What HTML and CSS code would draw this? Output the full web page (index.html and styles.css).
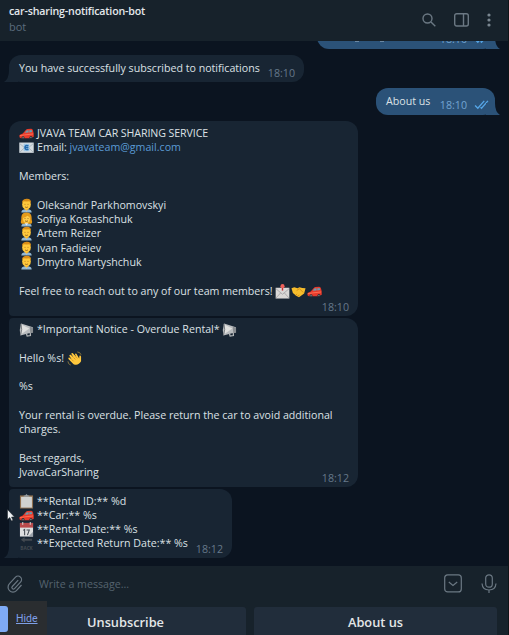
FILE: index.html
```html
<!DOCTYPE html>
<html lang="en">
<head>
<meta charset="utf-8">
<title>car-sharing-notification-bot</title>
<link rel="stylesheet" href="styles.css">
</head>
<body>
<svg class="defs" aria-hidden="true">
  <symbol id="car" viewBox="0 0 16 16">
    <path d="M.5 9.500 4 8 7 4.500Q7.500 3.500 9 3.300L13 3Q14.500 3 15 5L15.700 8V11.500L13 13H2L.5 12Z" fill="#e83b2c"/>
    <path d="M6.200 7.300 8 4.800 10.200 4.500V7ZM11 4.500 13.500 4.300 14 6.500 11 6.900Z" fill="#6b9caf"/>
    <path d="M1 10.300 6 9.500 15 8.500" stroke="#ff7053" fill="none"/>
    <circle cx="4.300" cy="12.400" r="1.600" fill="#292d33"/><circle cx="12.700" cy="12.200" r="1.600" fill="#292d33"/>
    <circle cx="4.300" cy="12.400" r=".6" fill="#a8adb0"/><circle cx="12.700" cy="12.200" r=".6" fill="#a8adb0"/>
  </symbol>
  <symbol id="email" viewBox="0 0 16 16">
    <path d="M.3 2.700h15.400v11H.3z" fill="#d5dce0"/>
    <path d="m1 4 7 6 7-6M1 13l5-5m9 5-5-5" stroke="#a8b3bd" fill="none"/>
    <path d="M5 4h6v8H5z" fill="#9cc7e8"/><path d="M10 6.300C8 5 6.300 6.200 6.300 8s1.800 3 3.700 1.800M6.500 8H10" stroke="#246bae" stroke-width="1.500" fill="none"/>
  </symbol>
  <symbol id="man" viewBox="0 0 16 16">
    <path d="M2.500 15.500Q2.500 12.500 6 12h4q3.500.5 3.500 3.500z" fill="#91b8d4"/><path d="m6 11.500 2 3 2-3z" fill="#e9edf0"/>
    <path d="M6.300 9.500h3.400v3L8 13.500 6.300 12z" fill="#dc951f"/>
    <ellipse cx="8" cy="6.800" rx="4.600" ry="5.600" fill="#ffc83b"/>
    <path d="M3.200 6Q2.500 1 8 .7T12.800 6L11.500 3.500Q8 3.800 4.500 3.500Z" fill="#d98d17"/>
    <path d="M6 6.800h.8m2.400 0h.8M6.500 9.600q1.500 1 3 0" stroke="#815019" fill="none" stroke-width=".8"/>
  </symbol>
  <symbol id="woman" viewBox="0 0 16 16">
    <path d="M2.500 15.500q0-3 3.500-3.500h4q3.500.5 3.500 3.500z" fill="#91b8d4"/>
    <path d="M8 .5C3 .5 2.500 4 2.500 7S1 11 3 12.500h10C15 11 13.500 10 13.500 7S13 .5 8 .5Z" fill="#e49a19"/>
    <ellipse cx="8" cy="7.200" rx="3.700" ry="4.500" fill="#ffcd49"/>
    <path d="M4 6Q5 2 8 2t4 4L9 4Q7 6 4 6Z" fill="#e49a19"/><path d="m6 12 2 2.500 2-2.500z" fill="#e9edf0"/>
    <path d="M6 7h.8m2.400 0h.8M6.500 9.500q1.500 1 3 0" stroke="#815019" fill="none"/>
  </symbol>
  <symbol id="inbox" viewBox="0 0 16 16">
    <path d="M.7 4h14.600v11.500H.7z" fill="#d9d8d7"/><path d="m1 5 7 6 7-6M1 15l5-5.500M15 15l-5-5.500" stroke="#aaa9ac" fill="none"/>
    <path d="M8 3v4" stroke="#bd2b30" stroke-width="1.500"/><circle cx="8" cy="2.300" r="2.200" fill="#ef615b"/>
  </symbol>
  <symbol id="shake" viewBox="0 0 16 16">
    <path d="m.5 4.500 3-1L7 4.500l2-1 3 .7 3.500.3L14 10l-5.500 4-3-1.500L2 9.500Z" fill="#f6bd2c"/>
    <path d="m6 7 3-2 4 4M5 12l1.500-1.500M7 13l1.500-1.500M9 13l-1-1" stroke="#c98112" fill="none" stroke-width=".8"/>
  </symbol>
  <symbol id="horn" viewBox="0 0 16 16">
    <path d="M2.200 1.500 14.800 5.500v5.500L1.500 14.500Q0 8 2.200 1.500Z" fill="#b9bcbe"/><path d="m3 3 8 4-8 5.500" fill="#e0e0de"/>
    <path d="M2 2q2 6-.5 12" stroke="#73777b" fill="none"/><path d="M11.500 5 15 6v5.500l-3 .5Z" fill="#888c90"/>
    <path d="m8 12.500.7 2.500 3.500-.5-.2-3" stroke="#b4b7b9" fill="none" stroke-width="1.300"/>
  </symbol>
  <symbol id="wave" viewBox="0 0 16 16">
    <path d="M7 14 1.500 8.500Q1 7 2.500 7L5 9 2.500 5Q2.500 3.500 4 4L7 7 4.500 3Q5 1.500 6.300 2.300L10 6.500 8.500 3.500Q9 2 10 3l3 5 .2-3q1.300-1 1.800 1V11q-3 5-8 3Z" fill="#ffc83d"/>
    <path d="m5 9 2 2M7 7l2 2m0-3 2 2" stroke="#c98921" fill="none" stroke-width=".8"/>
    <path d="M11 1q3 0 4 3M1 11q0 3 3 4" stroke="#8b793f" fill="none"/>
  </symbol>
  <symbol id="clip" viewBox="0 0 16 16">
    <path d="M1 1.500h14v14H1z" fill="#8f704f"/><path d="M2.200 3h11.600v11.500H2.200z" fill="#d0d2d0"/>
    <path d="M5 3V1.500h1.500L8 0l1.500 1.500H11V3z" fill="#969da2"/>
  </symbol>
  <symbol id="cal" viewBox="0 0 16 16">
    <path d="M1 1h14v14.500H1z" fill="#dedfe0"/><path d="M1 1h14v5H1z" fill="#b84a4c"/>
    <path d="M4 0v3m8-3v3" stroke="#ddd"/><path d="m4.500 9 1.500-1v6M8 8.500h3l-2 5.500" stroke="#454b53" stroke-width="1.100" fill="none"/><path d="m10 15.500 5-5v5z" fill="#9ba2aa"/>
  </symbol>
  <symbol id="back" viewBox="0 0 16 16">
    <path d="m2 4 4-3v2h8v2H6v2Z" fill="#434a51"/>
    <text x="8" y="14.500" text-anchor="middle" class="back-label">BACK</text>
  </symbol>
  <symbol id="checks" viewBox="0 0 16 12"><path d="m1 7 3 3 7-8M7 9l1 1 7-8" fill="none" stroke="#55a5e6" stroke-width="1.500"/></symbol>
</svg>

<div class="app">
  <header class="header">
    <div class="peer">
      <h1 class="title">car-sharing-notification-bot</h1>
      <div class="status">bot</div>
    </div>
    <div class="tools">
      <svg width="14" height="14" viewBox="0 0 14 14"><circle cx="5.500" cy="5.500" r="4.500"/><path d="m9 9 4.300 4.300"/></svg>
      <svg width="15" height="14" viewBox="0 0 15 14"><rect x=".7" y=".7" width="13.600" height="12.300" rx="2"/><path d="M9.500 1v12"/></svg>
      <svg class="dots" width="4" height="14" viewBox="0 0 4 14"><circle cx="2" cy="2" r="1.600"/><circle cx="2" cy="7" r="1.600"/><circle cx="2" cy="12" r="1.600"/></svg>
    </div>
  </header>

  <main class="chat">
    <div class="msg out cut tail"><span class="time">18:10</span><svg class="checks"><use href="#checks"/></svg><i class="stem"></i><i class="stem"></i></div>
    <div class="msg in short tail"><p>You have successfully subscribed to notifications</p><span class="time">18:10</span></div>
    <div class="msg out about tail"><p>About us</p><span class="time">18:10</span><svg class="checks"><use href="#checks"/></svg></div>
    <div class="msg in team">
      <p><svg class="e"><use href="#car"/></svg><span class="caps">JVAVA TEAM CAR SHARING SERVICE</span></p>
      <p><svg class="e"><use href="#email"/></svg>Email: <a>jvavateam@gmail.com</a></p>
      <p></p>
      <p>Members:</p>
      <p></p>
      <p><svg class="e"><use href="#man"/></svg>Oleksandr Parkhomovskyi</p>
      <p><svg class="e"><use href="#woman"/></svg>Sofiya Kostashchuk</p>
      <p><svg class="e"><use href="#man"/></svg>Artem Reizer</p>
      <p><svg class="e"><use href="#man"/></svg>Ivan Fadieiev</p>
      <p><svg class="e"><use href="#man"/></svg>Dmytro Martyshchuk</p>
      <p></p>
      <p>Feel free to reach out to any of our team members! <span class="row"><svg class="e"><use href="#inbox"/></svg><svg class="e"><use href="#shake"/></svg><svg class="e"><use href="#car"/></svg></span></p>
      <span class="time">18:10</span>
    </div>
    <div class="msg in notice">
      <p><svg class="e"><use href="#horn"/></svg>*Important Notice - Overdue Rental* <svg class="e"><use href="#horn"/></svg></p>
      <p></p>
      <p>Hello %s! <svg class="e"><use href="#wave"/></svg></p>
      <p></p>
      <p>%s</p>
      <p></p>
      <p>Your rental is overdue. Please return the car to avoid additional</p>
      <p>charges.</p>
      <p></p>
      <p>Best regards,</p>
      <p>JvavaCarSharing</p>
      <span class="time">18:12</span>
    </div>
    <div class="msg in rental tail">
      <p><svg class="e"><use href="#clip"/></svg>**Rental ID:** %d</p>
      <p><svg class="e"><use href="#car"/></svg>**Car:** %s</p>
      <p><svg class="e"><use href="#cal"/></svg>**Rental Date:** %s</p>
      <p><svg class="e"><use href="#back"/></svg>**Expected Return Date:** %s</p>
      <span class="time">18:12</span>
    </div>
    <svg class="cursor" width="8" height="13" viewBox="0 0 8 13"><path d="M.5.5v10l2.300-2 1.700 3.500 1.500-.7L4.500 8h3Z" fill="#eef1f4" stroke="#1b2026" stroke-width=".5"/></svg>
  </main>

  <footer class="footer">
    <div class="composer">
      <svg class="attach" width="16" height="18" viewBox="0 0 16 18"><path d="M11.200 5.200 5.300 11.500a1.500 1.500 0 0 0 2.200 2.100l6-6.400a3.500 3.500 0 0 0-5-5L2.500 8.700a4.800 4.800 0 0 0 6.900 6.900L14.500 10"/></svg>
      <span class="placeholder">Write a message...</span>
      <svg width="18" height="19" viewBox="0 0 18 19"><rect x=".7" y=".9" width="16.600" height="17" rx="3"/><path d="m4.800 8 4.200 3.500L13.200 8"/></svg>
      <svg class="mic" width="16" height="20" viewBox="0 0 16 20"><rect x="4.700" y=".8" width="6.600" height="12.400" rx="3.300"/><path d="M1 9.500q.5 6.500 7 6.500t7-6.500M8 16v3"/></svg>
    </div>
    <div class="keys"><div class="key first">Unsubscribe</div><div class="key">About us</div></div>
  </footer>
  <div class="share"><span class="share-btn"></span><a>Hide</a></div>
</div>
</body>
</html>
```
FILE: styles.css
```css
* { box-sizing: border-box; }
body { margin: 0; background: #0b1420; font-family: "Open Sans", sans-serif; font-size: 10.65px; color: #dce1e5; }
.defs { position: absolute; width: 0; height: 0; }
.back-label { font: bold 5px "Open Sans", sans-serif; fill: #434a51; }
.app { position: relative; width: 509px; height: 635px; overflow: hidden; display: flex; flex-direction: column; border-right: 1px solid #101316; }
.header { height: 41px; flex: none; background: #17222b; display: flex; justify-content: space-between; padding: 3px 17px 0 9px; }
.title { margin: 0; font-size: 10.65px; line-height: 16px; font-weight: 600; color: #e4e8eb; letter-spacing: -.18px; }
.status { font-size: 11px; line-height: 16px; color: #5b6c7d; }
.tools { display: flex; gap: 18px; padding-top: 10px; }
.tools svg, .composer svg { fill: none; stroke: #6b7883; stroke-width: 1.4; flex: none; }
.tools .dots { fill: #7a8791; stroke: none; }
.chat { position: relative; height: 525px; flex: none; display: flex; flex-direction: column; overflow: hidden; padding-left: 9px; }
.msg { position: relative; flex: none; background: #182533; border-radius: 12px; padding: 6px 10px 0; }
.msg p { margin: 0; height: 14.33px; line-height: 14.33px; white-space: pre; }
.msg a { color: #5b9bd5; }
.caps { letter-spacing: -.1px; }
.time { position: absolute; right: 9px; bottom: 2px; line-height: 14px; color: #66788a; }
.out { background: #2b5278; align-self: flex-end; margin-right: 13px; }
.out .time { right: 28px; bottom: 3px; color: #72a4d2; }
.checks { position: absolute; right: 6px; bottom: 5px; width: 15px; height: 11px; }
.tail::after { content: ""; position: absolute; bottom: 0; width: 14px; height: 12px; background: inherit; }
.in.tail::after { left: -5px; clip-path: path("M14 0V12H0Q5 9 5 0Z"); }
.out.tail::after { right: -5px; clip-path: path("M0 0V12H14Q9 9 9 0Z"); }
.cut { width: 178px; height: 27px; margin-top: -19px; }
.cut .time { bottom: 3px; }
.cut .checks { bottom: 5px; }
.stem { position: absolute; left: 38px; top: 19px; width: 4px; height: 1px; background: #6a88a4; }
.stem + .stem { left: 63px; }
.short { width: 295px; height: 27px; margin-top: 6px; }
.about { width: 119px; height: 27px; margin-top: 6px; }
.team { width: 349px; height: 195px; margin-top: 6px; padding-top: 5px; border-radius: 12px 12px 12px 4px; }
.notice { width: 349px; height: 169px; margin-top: 2px; padding-top: 4px; border-radius: 4px 12px 12px 4px; }
.rental { width: 223px; height: 69px; margin-top: 2px; padding-top: 4.500px; border-radius: 4px 12px 12px 12px; }
.e { width: 15px; height: 15px; margin-right: 3px; vertical-align: -4px; }
.row .e { margin-right: .7px; }
.cursor { position: absolute; left: 7px; top: 468px; }
.footer { height: 69px; flex: none; background: #17222b; }
.composer { display: flex; align-items: center; height: 35px; padding: 0 11px 0 7px; }
.composer .placeholder { flex: 1; padding-left: 16px; color: #55626e; }
.composer svg { stroke-width: 1.2; }
.composer .mic { margin-left: 19px; }
.keys { display: flex; gap: 8px; padding: 6px 11px 0 8px; }
.key { width: 243px; height: 34px; background: #212d3b; border-radius: 3px; font-size: 12.8px; font-weight: 600; line-height: 31px; text-align: center; color: #e3e6e8; }
.key.first { width: 238px; padding-right: 3px; }
.share { position: absolute; left: 0; bottom: 0; width: 47px; height: 34px; display: flex; background: #2a2d30; padding-top: 5px; }
.share-btn { width: 8px; height: 26px; background: #7faaf5; border-radius: 0 3px 3px 0; }
.share a { margin-left: 8px; font: 10.5px/25px Roboto, sans-serif; color: #7f9fe6; text-decoration: underline; }
```
